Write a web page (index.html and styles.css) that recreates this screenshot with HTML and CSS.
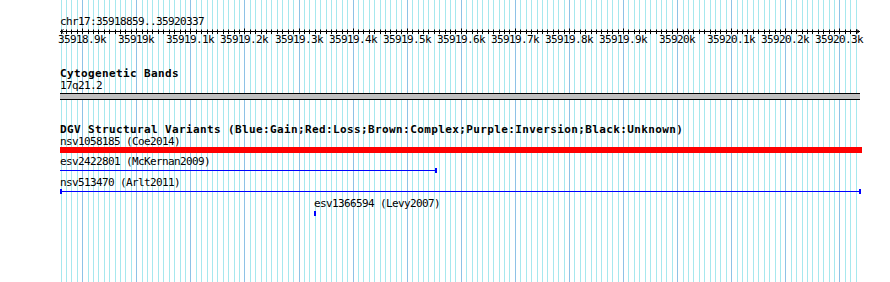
FILE: index.html
```html
<!DOCTYPE html>
<html>
<head>
<meta charset="utf-8">
<title>chr17:35918859..35920337</title>
<link rel="stylesheet" href="styles.css">
</head>
<body>
<div class="canvas">
  <svg class="grid" id="grid" width="890" height="282"><path class="minor" id="gridMinor" d=""/><path class="major" id="gridMajor" d=""/></svg>

  <section class="ruler-track">
    <div class="seg-name">chr17:35918859..35920337</div>
    <svg class="ruler" id="ruler" width="802" height="6">
      <path class="axis" id="rulerTicks" d=""/>
      <path class="axis" d="M0 3.5H800M3.5 1.5L0.5 3.5L3.5 5.5M796.5 1.5L799.5 3.5L796.5 5.5"/>
    </svg>
    <div class="tick-labels">
      <span class="tick-label" style="left:22px">35918.9k</span>
      <span class="tick-label" style="left:76px">35919k</span>
      <span class="tick-label" style="left:130px">35919.1k</span>
      <span class="tick-label" style="left:184px">35919.2k</span>
      <span class="tick-label" style="left:239px">35919.3k</span>
      <span class="tick-label" style="left:293px">35919.4k</span>
      <span class="tick-label" style="left:347px">35919.5k</span>
      <span class="tick-label" style="left:401px">35919.6k</span>
      <span class="tick-label" style="left:455px">35919.7k</span>
      <span class="tick-label" style="left:509px">35919.8k</span>
      <span class="tick-label" style="left:563px">35919.9k</span>
      <span class="tick-label" style="left:617px">35920k</span>
      <span class="tick-label" style="left:671px">35920.1k</span>
      <span class="tick-label" style="left:725px">35920.2k</span>
      <span class="tick-label" style="left:779px">35920.3k</span>
    </div>
  </section>

  <section class="track cyto">
    <div class="track-title">Cytogenetic Bands</div>
    <div class="feat-label">17q21.2</div>
    <div class="band"></div>
  </section>

  <section class="track dgv">
    <div class="track-title">DGV Structural Variants (Blue:Gain;Red:Loss;Brown:Complex;Purple:Inversion;Black:Unknown)</div>

    <div class="feature f-loss">
      <div class="feat-label">nsv1058185 (Coe2014)</div>
      <div class="bar loss" style="width:802px"></div>
    </div>

    <div class="feature f-gap3">
      <div class="feat-label">esv2422801 (McKernan2009)</div>
      <div class="span gain" style="width:377px"><span class="line"></span><span class="cap"></span></div>
    </div>

    <div class="feature f-gap4">
      <div class="feat-label">nsv513470 (Arlt2011)</div>
      <div class="span gain" style="width:801px"><span class="cap"></span><span class="line"></span><span class="cap"></span></div>
    </div>

    <div class="feature f-gap4" style="margin-left:254px">
      <div class="feat-label">esv1366594 (Levy2007)</div>
      <div class="span gain tiny"><span class="cap"></span></div>
    </div>
  </section>
</div>
<script src="script.js"></script>
</body>
</html>
```

FILE: styles.css
```css
html, body {
  margin: 0;
  padding: 0;
  background: #ffffff;
}

.canvas {
  position: relative;
  z-index: 0;
  width: 890px;
  height: 282px;
  box-sizing: border-box;
  padding: 16px 0 0 60px;
  overflow: hidden;
  background: #ffffff;
  color: #000000;
  font-family: "DejaVu Sans Mono", "Liberation Mono", monospace;
  font-size: 11px;
  line-height: 12px;
  letter-spacing: -0.62px;
}

.grid {
  position: absolute;
  left: 0;
  top: 0;
  z-index: -1;
  shape-rendering: crispEdges;
}

.grid .minor {
  stroke: #a6e8ee;
  stroke-width: 1;
  fill: none;
}

.grid .major {
  stroke: #8ec2e6;
  stroke-width: 1;
  fill: none;
}

.seg-name,
.feat-label,
.track-title {
  height: 12px;
  white-space: nowrap;
}

.ruler {
  display: block;
  overflow: visible;
}

.ruler .axis {
  stroke: #000000;
  stroke-width: 1;
  fill: none;
}

.tick-labels {
  position: relative;
  height: 12px;
}

.tick-label {
  position: absolute;
  top: 0;
  transform: translateX(-50%);
  white-space: nowrap;
}

.cyto {
  margin-top: 22px;
}

.track-title {
  font-weight: bold;
  letter-spacing: 0.38px;
}

.band {
  margin-top: 1px;
  width: 800px;
  height: 5px;
  background: #c0c0c0;
  border-top: 1px solid #000000;
  border-bottom: 1px solid #000000;
}

.dgv {
  margin-top: 24px;
}

.f-loss .feat-label {
  height: 11px;
  line-height: 11px;
}

.feature {
  display: flex;
  flex-direction: column;
  align-items: flex-start;
}

.f-gap3 {
  margin-top: 3px;
}

.f-gap4 {
  margin-top: 4px;
}

.bar {
  height: 6px;
}

.loss {
  background: #ff0000;
}

.span {
  display: flex;
  align-items: center;
  height: 5px;
}

.span .line {
  flex: 1;
  height: 1px;
  background: #0000ff;
}

.span .cap {
  width: 2px;
  height: 5px;
  background: #0000ff;
}

.tiny {
  margin-top: 1px;
}
```

FILE: script.js
```js
(function () {
  var start = 35918859, end = 35920337;
  var left = 60, width = 800, n = end - start + 1;
  function px(p) { return Math.round(left + (p - start) * width / n); }

  var minor = [], major = [], ticks = [];
  var first = Math.ceil(start / 10) * 10;
  for (var p = first; p <= end; p += 10) {
    var x = px(p);
    var isMajor = p % 100 === 0;
    (isMajor ? major : minor).push('M' + (x + 0.5) + ' 0V282');
    var rx = x - left + 0.5;
    if (isMajor) {
      ticks.push('M' + rx + ' 0.5V6');
    } else {
      ticks.push('M' + rx + ' 1.5V6');
    }
  }
  document.getElementById('gridMinor').setAttribute('d', minor.join(''));
  document.getElementById('gridMajor').setAttribute('d', major.join(''));
  document.getElementById('rulerTicks').setAttribute('d', ticks.join(''));
})();
```
